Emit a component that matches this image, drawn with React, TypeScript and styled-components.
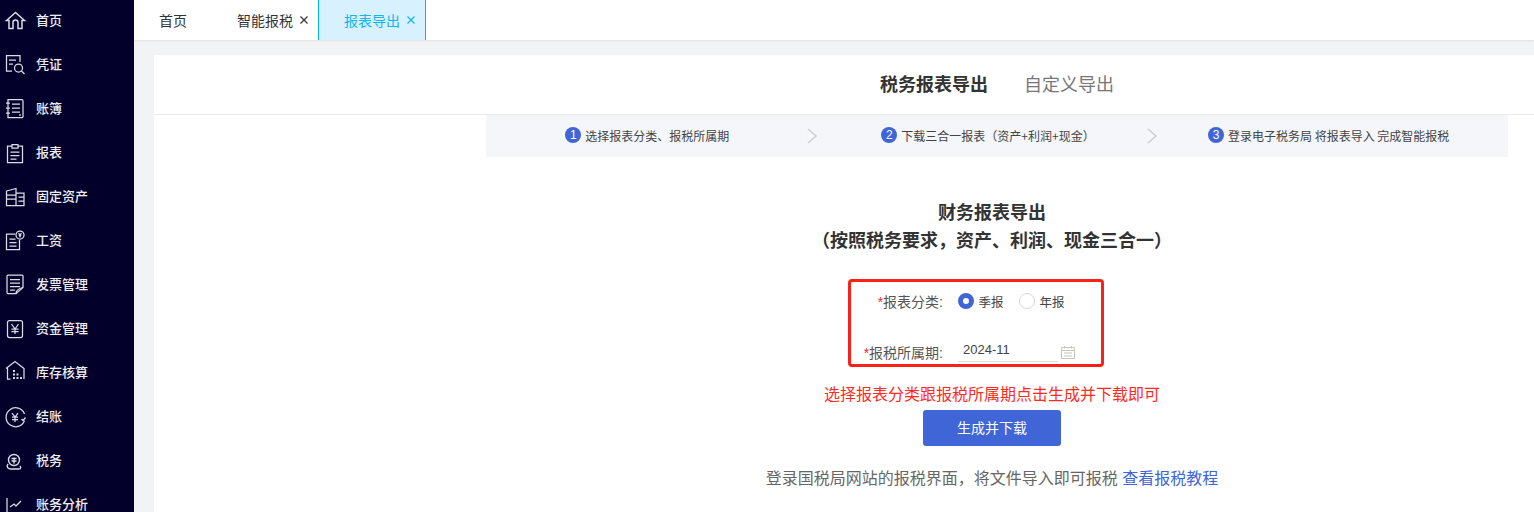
import { ReactNode } from 'react'
import styled, { createGlobalStyle } from 'styled-components'

const GlobalStyle = createGlobalStyle`
  html, body {
    margin: 0;
    height: 100%;
    overflow: hidden;
    background: #f2f3f5;
    font-family: "Liberation Sans", "Noto Sans CJK SC", sans-serif;
  }
`

const Layout = styled.div`
  display: flex;
  width: 1534px;
  height: 512px;
  overflow: hidden;
`

const Sidebar = styled.nav`
  flex: 0 0 134px;
  height: 512px;
  overflow: hidden;
  background: #02002a;
`

const MenuList = styled.ul`
  list-style: none;
  margin: -2px 0 0;
  padding: 0;
`

const MenuItem = styled.li`
  display: flex;
  align-items: center;
  gap: 8px;
  height: 44px;
  padding-left: 4px;
  color: #eeeef2;
  font-size: 13px;
  font-weight: 500;
`

const MenuLabel = styled.span`
  margin-bottom: 2px;
`

const MenuIcon = styled.svg`
  flex: 0 0 24px;
  width: 24px;
  height: 24px;
  fill: none;
  stroke: #dcdce4;
  stroke-width: 1.25;
`

const Main = styled.div`
  flex: 1;
  min-width: 0;
  display: flex;
  flex-direction: column;
`

const TabBar = styled.div`
  display: flex;
  flex: 0 0 40px;
  background: #fff;
  box-shadow: 0 1px 2px rgba(0, 0, 0, 0.08);
`

const Tab = styled.div<{ $active?: boolean }>`
  display: flex;
  align-items: center;
  gap: 6px;
  padding: 0 9px 0 25px;
  font-size: 14px;
  color: ${p => (p.$active ? '#12b5ee' : '#333')};
  background: ${p => (p.$active ? '#d8f1fe' : 'transparent')};
  border-left: ${p => (p.$active ? '1px solid #00b4ee' : 'none')};
  border-right: ${p => (p.$active ? '1px solid #00b4ee' : 'none')};
`

const PlainTab = styled(Tab)`
  padding-right: 25px;
`

const CloseIcon = styled.svg`
  width: 10px;
  height: 10px;
  stroke: currentColor;
  stroke-width: 1.2;
`

const Page = styled.div`
  flex: 1;
  padding: 15px 0 0 20px;
  overflow: hidden;
`

const Panel = styled.div`
  height: 100%;
  background: #fff;
`

const PanelHeader = styled.div`
  display: flex;
  justify-content: center;
  align-items: center;
  gap: 36px;
  box-sizing: border-box;
  height: 60px;
  padding: 0 26px 3px 332px;
  border-bottom: 1px solid #ebebeb;
`

const HeaderTitle = styled.div<{ $active?: boolean }>`
  font-size: 18px;
  font-weight: ${p => (p.$active ? 700 : 400)};
  color: ${p => (p.$active ? '#333' : '#777')};
`

const Column = styled.div`
  width: 1022px;
  margin-left: 332px;
`

const Steps = styled.div`
  display: flex;
  height: 42px;
  background: #f4f6fa;
  font-family: "Noto Sans CJK SC", sans-serif;
  font-size: 12px;
  color: #444;
`

const Step = styled.div`
  position: relative;
  flex: 1;
  display: flex;
  align-items: center;
  justify-content: center;
  gap: 4px;
  padding-right: 18px;
  white-space: nowrap;
`

const StepText = styled.span`
  margin-bottom: 2px;
`

const StepNumber = styled.span`
  display: flex;
  align-items: center;
  justify-content: center;
  width: 16px;
  height: 16px;
  margin-bottom: 2px;
  border-radius: 50%;
  background: #4065d6;
  color: #fff;
  font-family: "Liberation Sans", sans-serif;
  font-size: 12px;
`

const StepArrow = styled.svg`
  position: absolute;
  right: 9px;
  top: 13px;
  width: 12px;
  height: 16px;
  fill: none;
  stroke: #d0d0d0;
  stroke-width: 1.6;
`

const Content = styled.div`
  display: flex;
  flex-direction: column;
  align-items: center;
  padding-right: 10px;
`

const Title = styled.h2`
  margin: 42px 0 24px;
  font-size: 18px;
  line-height: 28px;
  font-weight: 700;
  color: #333;
  text-align: center;
`

const FormBox = styled.div`
  box-sizing: border-box;
  display: grid;
  grid-template-columns: 92px 1fr;
  grid-template-rows: 28px 26px;
  row-gap: 24px;
  column-gap: 15px;
  align-items: center;
  width: 256px;
  height: 88px;
  margin-right: 32px;
  padding-top: 5px;
  border: 3px solid #fb2118;
  border-radius: 4px;
  font-size: 14px;
  color: #555;
`

const Label = styled.label`
  display: block;
  text-align: right;
  white-space: nowrap;

  &::before {
    content: '*';
    color: #f5222d;
  }
`

const RadioGroup = styled.div`
  display: flex;
  align-items: center;
  font-size: 12.5px;
  color: #444;
`

const Radio = styled.span<{ $checked?: boolean }>`
  box-sizing: border-box;
  width: 16px;
  height: 16px;
  margin-right: 4.5px;
  border-radius: 50%;
  border: ${p => (p.$checked ? '5px solid #4065d6' : '1px solid #d9d9d9')};
  background: #fff;
`

const RadioText = styled.span`
  margin-right: 15.5px;
`

const DateRow = styled.div`
  display: flex;
  align-items: flex-end;
  gap: 3px;
  margin-bottom: 4px;
`

const DateField = styled.div`
  box-sizing: border-box;
  width: 100px;
  height: 24px;
  padding-left: 5px;
  border-bottom: 1px solid #ddd;
  font-size: 13px;
  line-height: 24px;
  color: #444;
`

const CalendarIcon = styled.svg`
  width: 14px;
  height: 14px;
  margin-bottom: 3px;
  fill: none;
  stroke: #c6c6bb;
  stroke-width: 1;
`

const Hint = styled.div`
  margin-top: 16px;
  font-size: 16px;
  line-height: 24px;
  color: #ff2a1f;
`

const Button = styled.button`
  width: 138px;
  height: 36px;
  margin-top: 3px;
  padding: 0 0 2px;
  border: none;
  border-radius: 3px;
  background: #4065d6;
  color: #fff;
  font-family: inherit;
  font-size: 14px;
  cursor: pointer;
`

const Note = styled.div`
  margin-top: 21px;
  font-size: 16px;
  line-height: 24px;
  color: #666;
`

const NoteLink = styled.a`
  color: #4065d6;
  text-decoration: none;
`

const icons: { label: string; icon: ReactNode }[] = [
  {
    label: '首页',
    icon: <path d="M2.5 12.5 11.5 4.5l9 8H18v8h-4v-6a2.5 2.5 0 0 0-5 0v6H5v-8Z" strokeWidth="1.5" />,
  },
  {
    label: '凭证',
    icon: (
      <>
        <path d="M8 19H2.5V3.5H16V10M5 8h7M5 12h4" />
        <circle cx="14.5" cy="16" r="4" />
        <path d="m17.5 19 3 3" />
      </>
    ),
  },
  {
    label: '账簿',
    icon: (
      <>
        <path d="M4 3.5h14a1.5 1.5 0 0 1 1 1.5v15.5a1 1 0 0 1-1 1H4Z" />
        <path d="M8 8h8M8 12h8M8 16h8M2 7h4M2 12h4M2 17h4M16 18v2" />
      </>
    ),
  },
  {
    label: '报表',
    icon: (
      <>
        <path d="M8 6H3.5v16.5h15V6H14" />
        <path d="M8 4.5h6V8H8ZM6.5 12h9M6.5 15.5h9M6.5 19h6" />
      </>
    ),
  },
  {
    label: '固定资产',
    icon: (
      <>
        <path d="M2.5 7 12 4.5v17H2.5ZM12 9h8v12.5h-8" />
        <path d="M2.5 11H12M2.5 15H12M14.5 13H20M14.5 17H20" />
      </>
    ),
  },
  {
    label: '工资',
    icon: (
      <>
        <path d="M11 6H2.5v15.5h13V12" />
        <path d="M5.5 11h6M5.5 14.5h7M5.5 18h7" />
        <circle cx="16" cy="7" r="4" />
        <path d="m14.5 5 1.5 2 1.5-2M16 7v2.5M14.7 7.5h2.6" />
      </>
    ),
  },
  {
    label: '发票管理',
    icon: (
      <>
        <path d="M12 21.5H4a1 1 0 0 1-1-1V4a1 1 0 0 1 1-1h14a1 1 0 0 1 1 1v11.5Z" />
        <path d="M6 7.5h10M6 11h10M6 14.5h10M6 18h5M12 21.5c0-3 2-5 7-6" />
      </>
    ),
  },
  {
    label: '资金管理',
    icon: (
      <>
        <rect x="3.5" y="4.5" width="15" height="17" rx="2" />
        <path d="m7.5 8 3.5 5 3.5-5M11 13v5M7.5 13h7M7.5 15.5h7" />
      </>
    ),
  },
  {
    label: '库存核算',
    icon: (
      <>
        <path d="M2 8.5 11 1.5l9 7M3.5 8v11h3M20 8v11" />
        <path d="M9 10h2v2H9ZM9 13.5h2v2H9ZM12.5 13.5h2v2h-2ZM9 17h2v2H9ZM12.5 17h2v2h-2ZM16 17h2v2h-2Z" fill="#d6d6de" stroke="none" />
      </>
    ),
  },
  {
    label: '结账',
    icon: (
      <>
        <path d="M20.5 16.5A9.5 9.5 0 1 1 20.5 10" />
        <path d="m8 9 3 4 3-4M11 13v5M8 13h6M8 15.5h6M17.5 15l1.5 1.5 2.5-3" />
      </>
    ),
  },
  {
    label: '税务',
    icon: (
      <>
        <circle cx="10" cy="12" r="5.5" strokeWidth="1.4" />
        <path d="M7.5 10.5h5M10 9.5v6M7.5 13h5M4 16c-2 3 0 5 3 5h8c2 0 2-2 1-3" strokeWidth="1.4" />
      </>
    ),
  },
  {
    label: '账务分析',
    icon: (
      <>
        <path d="M3 6v16h15" />
        <path d="m6 15 4-3 2 2 5-5" />
      </>
    ),
  },
]

const steps = ['选择报表分类、报税所属期', '下载三合一报表（资产+利润+现金）', '登录电子税务局 将报表导入 完成智能报税']

function Close() {
  return (
    <CloseIcon viewBox="0 0 10 10">
      <path d="m1.5 1.5 7 7M8.5 1.5l-7 7" />
    </CloseIcon>
  )
}

function App() {
  return (
    <Layout>
      <GlobalStyle />
      <Sidebar>
        <MenuList>
          {icons.map(item => (
            <MenuItem key={item.label}>
              <MenuIcon viewBox="0 0 24 24">{item.icon}</MenuIcon>
              <MenuLabel>{item.label}</MenuLabel>
            </MenuItem>
          ))}
        </MenuList>
      </Sidebar>
      <Main>
        <TabBar>
          <PlainTab>首页</PlainTab>
          <Tab>
            智能报税
            <Close />
          </Tab>
          <Tab $active>
            报表导出
            <Close />
          </Tab>
        </TabBar>
        <Page>
          <Panel>
            <PanelHeader>
              <HeaderTitle $active>税务报表导出</HeaderTitle>
              <HeaderTitle>自定义导出</HeaderTitle>
            </PanelHeader>
            <Column>
              <Steps>
                {steps.map((text, i) => (
                  <Step key={text}>
                    <StepNumber>{i + 1}</StepNumber>
                    <StepText>{text}</StepText>
                    {i < 2 && (
                      <StepArrow viewBox="0 0 12 16">
                        <path d="m2 1 8 7-8 7" />
                      </StepArrow>
                    )}
                  </Step>
                ))}
              </Steps>
              <Content>
                <Title>
                  财务报表导出
                  <br />
                  （按照税务要求，资产、利润、现金三合一）
                </Title>
                <FormBox>
                  <Label>报表分类:</Label>
                  <RadioGroup>
                    <Radio $checked />
                    <RadioText>季报</RadioText>
                    <Radio />
                    <RadioText>年报</RadioText>
                  </RadioGroup>
                  <Label>报税所属期:</Label>
                  <DateRow>
                    <DateField>2024-11</DateField>
                    <CalendarIcon viewBox="0 0 14 14">
                      <path d="M.5 2.5h13v11H.5ZM.5 5.5h13M3.5 1v2.5M10.5 1v2.5M3 8h8M3 11h8" />
                    </CalendarIcon>
                  </DateRow>
                </FormBox>
                <Hint>选择报表分类跟报税所属期点击生成并下载即可</Hint>
                <Button>生成并下载</Button>
                <Note>
                  登录国税局网站的报税界面，将文件导入即可报税 <NoteLink>查看报税教程</NoteLink>
                </Note>
              </Content>
            </Column>
          </Panel>
        </Page>
      </Main>
    </Layout>
  )
}

export default App
